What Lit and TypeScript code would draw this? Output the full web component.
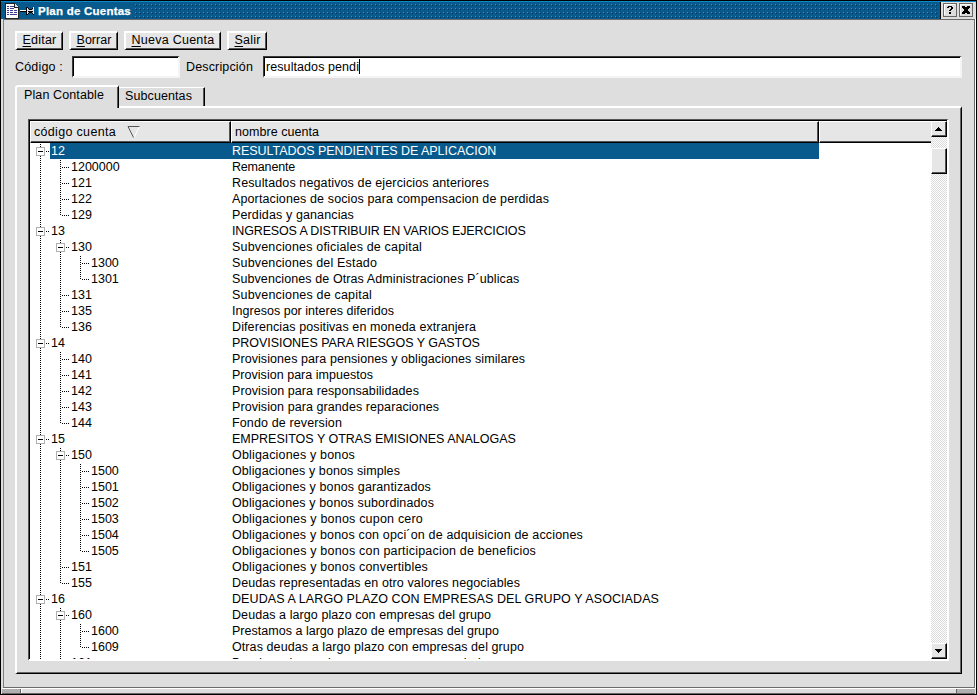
import { LitElement, html, svg, css } from "lit";
import { customElement } from "lit/decorators.js";

const FAMILY = '"Liberation Sans", Arial, sans-serif';
const ctx = document.createElement("canvas").getContext("2d")!;

/** Letter spacing which makes a string take up the given advance width. */
function tracking(text: string, width: number, font = "12.5px"): string {
  ctx.font = `${font} ${FAMILY}`;
  return `letter-spacing:${((width - ctx.measureText(text).width) / text.length).toFixed(3)}px`;
}

type Row = { level: number; code: string; name: string; width: number };
const rows: Row[] = (
  [
    [0, "12", "RESULTADOS PENDIENTES DE APLICACION", 265],
    [1, "1200000", "Remanente", 63],
    [1, "121", "Resultados negativos de ejercicios anteriores", 257],
    [1, "122", "Aportaciones de socios para compensacion de perdidas", 317],
    [1, "129", "Perdidas y ganancias", 122],
    [0, "13", "INGRESOS A DISTRIBUIR EN VARIOS EJERCICIOS", 295],
    [1, "130", "Subvenciones oficiales de capital", 190],
    [2, "1300", "Subvenciones del Estado", 145],
    [2, "1301", "Subvenciones de Otras Administraciones P´ublicas", 288],
    [1, "131", "Subvenciones de capital", 140],
    [1, "135", "Ingresos por interes diferidos", 162],
    [1, "136", "Diferencias positivas en moneda extranjera", 244],
    [0, "14", "PROVISIONES PARA RIESGOS Y GASTOS", 249],
    [1, "140", "Provisiones para pensiones y obligaciones similares", 293],
    [1, "141", "Provision para impuestos", 141],
    [1, "142", "Provision para responsabilidades", 187],
    [1, "143", "Provision para grandes reparaciones", 207],
    [1, "144", "Fondo de reversion", 110],
    [0, "15", "EMPRESITOS Y OTRAS EMISIONES ANALOGAS", 285],
    [1, "150", "Obligaciones y bonos", 123],
    [2, "1500", "Obligaciones y bonos simples", 168],
    [2, "1501", "Obligaciones y bonos garantizados", 199],
    [2, "1502", "Obligaciones y bonos subordinados", 202],
    [2, "1503", "Obligaciones y bonos cupon cero", 191],
    [2, "1504", "Obligaciones y bonos con opci´on de adquisicion de acciones", 351],
    [2, "1505", "Obligaciones y bonos con participacion de beneficios", 304],
    [1, "151", "Obligaciones y bonos convertibles", 196],
    [1, "155", "Deudas representadas en otro valores negociables", 288],
    [0, "16", "DEUDAS A LARGO PLAZO CON EMPRESAS DEL GRUPO Y ASOCIADAS", 430],
    [1, "160", "Deudas a largo plazo con empresas del grupo", 259],
    [2, "1600", "Prestamos a largo plazo de empresas del grupo", 267],
    [2, "1609", "Otras deudas a largo plazo con empresas del grupo", 292],
    [1, "161", "Deudas a largo plazo con empresas asociadas", 262],
  ] as [number, string, string, number][]
).map(([level, code, name, width]) => ({ level, code, name, width }));

/** True when a later sibling exists at the given level under the same parent. */
function continues(index: number, level: number): boolean {
  if (level === 0) return true;
  for (let i = index + 1; i < rows.length; i++) {
    if (rows[i].level < level) return false;
    if (rows[i].level === level) return true;
  }
  return false;
}

@customElement("account-tree")
class AccountTree extends LitElement {
  static styles = css`
    :host { display: block; flex: 1; min-height: 0; overflow: hidden; background: #fff; }
    .row { display: flex; height: 16px; line-height: 16px; white-space: pre; }
    .lines { display: block; flex: none; height: 16px; }
    .cells { display: flex; flex: 1; margin-right: 112px; }
    .code { flex: none; padding-left: 1px; box-sizing: border-box; }
    .selected .cells { background: #085a8c; color: #fff; }
  `;

  private lines(row: Row, index: number) {
    const parent = (rows[index + 1]?.level ?? 0) > row.level;
    const x = 10 + row.level * 20;
    const width = 20 + row.level * 20;
    const ancestors = Array.from({ length: row.level }, (_, l) => l).filter((l) => continues(index, l));
    return html`<svg class="lines" width=${width} height="16" shape-rendering="crispEdges" stroke="#000" fill="none">
      ${ancestors.map((l) => svg`<path d="M${10.5 + l * 20} 1V16" stroke-dasharray="1 1"/>`)}
      <path d=${`M${x + 0.5} 1V${continues(index, row.level) ? 16 : 9}`} stroke-dasharray="1 1" />
      <path d=${`M${x + 2} 8.5H${x + 10}`} stroke-dasharray="1 1" />
      ${parent
        ? svg`<rect x=${x - 3.5} y="4.5" width="8" height="8" fill="#fff" stroke="#b0b0b0"/><path d=${`M${x - 2} 8.5h5`}/>`
        : ""}
    </svg>`;
  }

  render() {
    return rows.map(
      (row, i) => html`<div class="row ${i === 0 ? "selected" : ""}">
        ${this.lines(row, i)}<div class="cells"><span class="code" style="width:${182 - row.level * 20}px">${row.code}</span><span style=${tracking(row.name, row.width)}>${row.name}</span></div>
      </div>`
    );
  }
}

@customElement("app-root")
class AppRoot extends LitElement {
  static styles = css`
    :host {
      display: flex; flex-direction: column; width: 977px; height: 695px; box-sizing: border-box;
      border: 1px solid #000; background: #dedede; color: #000; overflow: hidden;
      font: 12.5px "Liberation Sans", Arial, sans-serif;
    }
    .title { display: flex; flex: none; height: 18px; box-sizing: border-box; background: #085a8c; border-top: 1px solid #1088c8; }
    .icons { flex: none; margin-left: 3px; width: 34px; height: 17px; }
    .caption { width: 96px; flex: none; color: #fff; font-weight: bold; font-size: 11.5px; line-height: 18px; white-space: pre; -webkit-text-stroke: .25px #fff; }
    .dots { flex: 1; height: 15px; margin: 1px 2px 0 0; }
    .controls { display: flex; gap: 2px; width: 36px; padding: 1px 1px 0 2px; box-sizing: border-box; background: #dedede; border-left: 1px solid #000; }
    .client { flex: 1; min-height: 0; display: flex; flex-direction: column; margin: 0 1px 0 2px; border: 1px solid #6a6a6a; border-left-color: #808080; padding: 11px 12px 13px 11px; box-shadow: 1px 0 #fff; }
    .buttons { display: flex; gap: 6px; height: 19px; flex: none; }
    .raised { background: #e6e6e6; border: 2px solid; border-color: #fff #000 #000 #fff; box-shadow: inset -1px -1px #555; box-sizing: border-box; }
    .btn { height: 19px; line-height: 15px; text-align: center; border-right-width: 1px; border-bottom-width: 1px; white-space: pre; }
    u { text-underline-offset: 2px; text-decoration-thickness: 1px; }
    .form { display: flex; height: 22px; flex: none; margin-top: 6px; line-height: 22px; white-space: pre; }
    .form > * { flex: none; }
    .field { box-sizing: border-box; height: 22px; line-height: 18px; background: #fff; border: 2px solid; border-color: #3a3a3a #f4f4f4 #f4f4f4 #3a3a3a; box-shadow: inset 1px 1px #000; border-top-width: 1px; border-left-width: 1px; padding: 1px 0 0 2px; }
    .form > span { box-sizing: border-box; }
    .caret { display: inline-block; width: 1px; height: 15px; background: #000; vertical-align: top; margin-top: 1px; }
    .tabs { display: flex; flex: none; align-items: flex-end; height: 21px; margin-top: 7px; white-space: pre; }
    .tab { box-sizing: border-box; border: solid; border-width: 2px 1px 0 2px; border-color: #fff #000 #fff #fff; box-shadow: inset -1px 0 #555; }
    .on { width: 104px; height: 23px; margin-bottom: -2px; padding-left: 7px; line-height: 17px; border-radius: 3px 0 0 0; background: #dedede; z-index: 1; }
    .off { width: 86px; height: 19px; line-height: 16px; padding-left: 6px; border-left: 0; border-top-width: 1px; }
    .pane { flex: 1; min-height: 0; display: flex; box-sizing: border-box; border: 2px solid; border-color: #fff #000 #000 #fff; box-shadow: inset -1px -1px #666; border-right-width: 1px; border-bottom-width: 1px; padding: 11px 12px 12px 11px; }
    .list { flex: 1; min-width: 0; display: flex; border: solid; border-width: 1px 2px 2px 1px; border-color: #555 #fff #fff #555; background: #000; padding: 1px 0 0 1px; }
    .main { flex: 1; display: flex; flex-direction: column; min-width: 0; }
    .head { display: flex; height: 22px; flex: none; white-space: pre; }
    .hc { box-sizing: border-box; background: #e6e6e6; height: 22px; border: solid; border-width: 1px 1px 1px 1px; border-color: #fff #000 #000 #fff; box-shadow: inset -1px -1px #555; line-height: 18px; padding: 1px 0 0 3px; display: flex; }
    .c1 { width: 201px; }
    .c2 { width: 588px; }
    .c3 { flex: 1; border-right: 0; box-shadow: inset 0 -1px #555; }
    .sort { width: 13px; height: 13px; margin: 2px 0 0 11px; }
    .scroll { width: 16px; flex: none; display: flex; flex-direction: column; background: repeating-conic-gradient(#fff 0 25%, #dadada 0 50%) 0 0 / 2px 2px; }
    .sb { width: 16px; height: 16px; border-width: 1px; flex: none; }
    .thumb { height: 26px; margin-top: 11px; }
    .space { flex: 1; }
    .sb svg { display: block; }
    .bottom { display: flex; height: 6px; margin: 0 1px; background: #dedede; border: solid; border-width: 1px 0; border-color: #fff #fff #666 #fff; box-sizing: border-box; flex: none; }
    .grip { width: 18px; background: #b0b0b0; }
    .bar { flex: 1; border: solid #666; border-width: 0 1px; box-shadow: inset 1px 0 #fff; }
  `;

  private button(key: string, rest: string, width: number, textWidth: number) {
    return html`<div class="btn raised" style="width:${width}px;${tracking(key + rest, textWidth)}"><u>${key}</u>${rest}</div>`;
  }

  private text(value: string, width: number) {
    return html`<span style=${tracking(value, width)}>${value}</span>`;
  }

  render() {
    return html`<div class="title"><svg class="icons" viewBox="4 2 34 17" shape-rendering="crispEdges">
        <path d="M5.5 3.5h9l4 4v10.5h-13z" fill="#fff" stroke="#222"/><path d="M14.5 3.5v4h4" fill="#ddd" stroke="#222"/>
        <path d="M7 6.5h2M10 6.5h4M7 8.5h2M10 8.5h4M7 10.5h2M10 10.5h3M14 10.5h3M7 12.5h2M10 12.5h3M14 12.5h3M7 14.5h2M10 14.5h7" stroke="#3c3c94" stroke-width="1.4"/>
        <path d="M20 11.5h7" stroke="#000"/><path d="M20 10.5h7" stroke="#fff"/>
        <path d="M26 7h2v1h1v1h3v-1h1v-1h1v8h-1v-1h-1v-1h-3v1h-1v1h-2z" fill="#000"/>
        <path d="M27.5 8v6M33.5 7v7M28 10.5h5" stroke="#e8e8e8"/><path d="M28 9.5h1M32 9.5h1M28 12.5h1M32 12.5h1" stroke="#aaa"/>
      </svg><div class="caption" style=${tracking("Plan de Cuentas", 93, "bold 11.5px")}>Plan de Cuentas</div><svg class="dots">
        <defs><pattern id="grain" width="4" height="4" patternUnits="userSpaceOnUse">
          <rect x="1" y="1" width="1" height="1" fill="#1898e0"/>
          <rect x="2" y="2" width="1" height="1" fill="#003358"/>
        </pattern></defs><rect width="100%" height="100%" fill="url(#grain)"/>
      </svg><div class="controls"><svg width="14" height="15" shape-rendering="crispEdges">
          <rect x=".5" y=".5" width="13" height="13" fill="#dedede" stroke="#666"/><path d="M1.5 12V1.5H12" stroke="#fff" fill="none"/>
          <path d="M4 5V4h1V3h4v1h1v2H9v1H8v1H6V7h1V6h1V4H6v1zM6 9h2v2H6z"/>
        </svg><svg width="14" height="15" shape-rendering="crispEdges">
          <rect x=".5" y=".5" width="13" height="13" fill="#dedede" stroke="#666"/><path d="M1.5 12V1.5H12" stroke="#fff" fill="none"/>
          <path d="M3 3h3v1h2V3h3v2h-1v1H9v2h1v1h1v2H8v-1H6v1H3V9h1V8h1V6H4V5H3z"/>
        </svg></div></div>
      <div class="client">
        <div class="buttons">${this.button("E", "ditar", 48, 34)}${this.button("B", "orrar", 49, 35)}${this.button("N", "ueva Cuenta", 97, 83)}${this.button("S", "alir", 40, 26)}</div>
        <div class="form"><span style="width:57px;${tracking("Código :", 48)}">Código :</span><div class="field" style="width:108px"></div><span style="width:77px;margin-left:6px;${tracking("Descripción", 67)}">Descripción</span><div class="field" style="width:699px">${this.text("resultados pendi", 93)}<span class="caret"></span></div></div>
        <div class="tabs"><div class="tab on">${this.text("Plan Contable", 80)}</div><div class="tab off">${this.text("Subcuentas", 67)}</div></div>
        <div class="pane"><div class="list">
          <div class="main">
            <div class="head"><div class="hc c1">${this.text("código cuenta", 82)}<svg class="sort" fill="none"><path d="M12.5 1.5L7 12.5" stroke="#fff"/><path d="M12.5 1.5H1L6.5 12.5" stroke="#555"/></svg></div><div class="hc c2">${this.text("nombre cuenta", 84)}</div><div class="hc c3"></div></div>
            <account-tree></account-tree>
          </div>
          <div class="scroll"><div class="sb raised"><svg width="14" height="14" shape-rendering="crispEdges"><path d="M6 5h1v1h1v1h1v1h1v1H3V8h1V7h1V6h1z"/></svg></div><div class="thumb sb raised"></div><div class="space"></div><div class="sb raised"><svg width="14" height="14" shape-rendering="crispEdges"><path d="M3 5h7v1H9v1H8v1H7v1H6V8H5V7H4V6H3z"/></svg></div></div>
        </div></div>
      </div>
      <div class="bottom"><div class="grip"></div><div class="bar"></div><div class="grip"></div></div>`;
  }
}
